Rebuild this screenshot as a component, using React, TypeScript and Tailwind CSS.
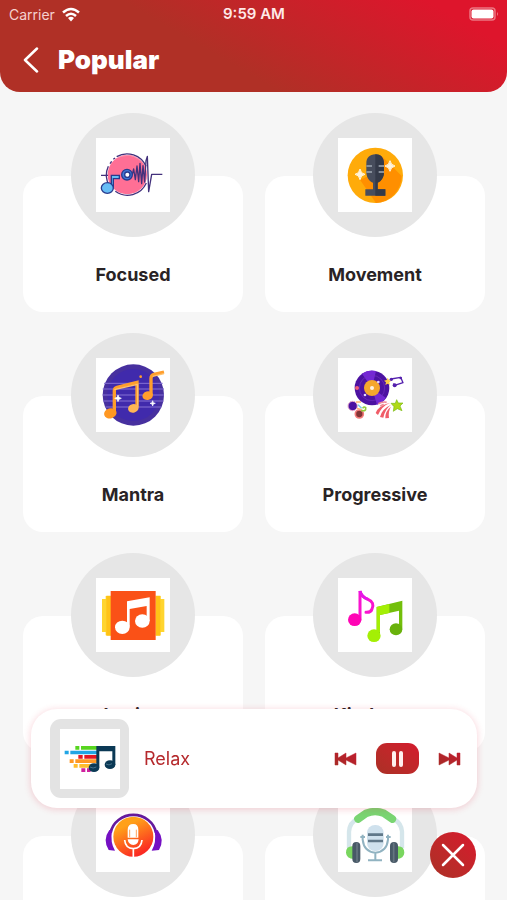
import type { ReactNode } from "react";

type Category = { id: string; name?: string; viewBox: string; art: ReactNode };

const focusedArt = (
  <>
    <circle cx="202" cy="210" r="59" fill="#ff6f95" />
    <path d="M165 165 A58 58 0 0 1 202 152 A58 58 0 0 1 250 178 A62 62 0 0 0 165 165" fill="#ff9ab4" />
    <path d="M148 243 A62 62 0 0 1 145 185 M150 177 L155 170 M160 164 L165 160 M170 156 A62 62 0 0 1 258 185 M259 235 A62 62 0 0 1 166 260" fill="none" stroke="#43317c" strokeWidth="4" />
    <path d="M123 212 H144 M205 209 H217 L221 193 L226 225 L231 184 L236 231 L240 176 L245 237 L249 183 L254 232 L258 168 L262 155 L266 261 L275 209 H307" fill="none" stroke="#43317c" strokeWidth="4" strokeLinejoin="round" />
    <circle cx="201" cy="210" r="16" fill="#3f78d8" stroke="#283b8e" strokeWidth="4" />
    <circle cx="202" cy="210" r="8" fill="#ffffff" stroke="#283b8e" strokeWidth="4" />
    <path d="M154 242 V212 H178 V222 H160 V249" fill="#66bdf5" stroke="#283b8e" strokeWidth="4" />
    <ellipse cx="142" cy="250" rx="18" ry="16" fill="#66bdf5" stroke="#283b8e" strokeWidth="4" />
  </>
);

const movementArt = (
  <>
    <circle cx="220" cy="212" r="83" fill="#ffab0a" />
    <path d="M239 154 L299 214 A83 83 0 0 1 222 295 L174 225 L195 216 Z" fill="#ff8f00" />
    <path d="M193 176 V202 C193 220 204 232 213 234 V254 H190 V273 H250 V254 H227 V234 C238 230 246 218 246 202 V176 C246 159 236 149 220 149 C203 149 193 160 193 176" fill="#474d5d" />
    <path d="M220 149 C236 149 246 159 246 176 V202 C246 218 238 230 227 234 V254 H250 V273 H220 Z" fill="#343a49" />
    <path d="M193 184 H210 M193 202 H210 M230 184 H246 M230 202 H246" stroke="#88909c" strokeWidth="6" />
    <path d="M174 193 Q176 207 189 209 Q176 211 174 225 Q172 211 159 209 Q172 207 174 193 M264 168 Q266 181 279 184 Q266 187 264 200 Q262 187 249 184 Q262 181 264 168" fill="#fff4dc" stroke="#fff4dc" strokeWidth="3" />
  </>
);

const mantraArt = (
  <>
    <circle cx="220" cy="211" r="92" fill="#47309f" />
    <circle cx="220" cy="211" r="78" fill="#402aac" />
    <path d="M132 176 H308 M128 193 H312 M128 211 H312 M130 229 H310 M136 247 H304" stroke="#8570d4" strokeWidth="3" />
    <path d="M163 265 V198 Q163 190 171 188 L231 173 V247 M273 211 V161 Q273 151 282 149 L312 142" fill="none" stroke="#ff9e2c" strokeWidth="10" />
    <path d="M163 195 L233 179 V249 M278 155 L312 147" fill="none" stroke="#ffc16d" strokeWidth="4" />
    <ellipse cx="151" cy="266" rx="19" ry="15" fill="#ff9822" transform="rotate(-15 151 266)" />
    <ellipse cx="220" cy="251" rx="16" ry="13" fill="#ffb655" transform="rotate(-15 220 251)" />
    <ellipse cx="263" cy="213" rx="16" ry="13" fill="#ff9e2c" transform="rotate(-15 263 213)" />
    <path d="M174 211 L177 218 L184 221 L177 224 L174 231 L171 224 L164 221 L171 218 Z M278 228 L280 234 L286 236 L280 238 L278 244 L276 238 L270 236 L276 234 Z" fill="#ffffff" stroke="#ffffff" strokeWidth="2" />
    <circle cx="242" cy="156" r="4" fill="#ff9e2c" />
  </>
);

const progressiveArt = (
  <>
    <circle cx="210" cy="190" r="52" fill="#4c12a1" />
    <path d="M210 190 L180 147 A52 52 0 0 1 222 139 Z M210 190 L252 220 A52 52 0 0 1 225 240 Z" fill="#7428d4" />
    <circle cx="210" cy="190" r="38" fill="none" stroke="#7330c0" strokeWidth="2" />
    <circle cx="210" cy="190" r="24" fill="#f5a62d" />
    <circle cx="210" cy="190" r="6" fill="#fff3e3" />
    <circle cx="165" cy="190" r="6" fill="#f45f76" />
    <circle cx="189" cy="211" r="4" fill="#e6d7ff" />
    <circle cx="229" cy="172" r="4" fill="#e6d7ff" />
    <path d="M257 159 L261 166 L268 168 L262 173 L264 181 L257 177 L250 181 L252 173 L246 168 L254 166 Z" fill="#ffca45" />
    <path d="M267 163 L296 158 L303 174 L278 182 L274 177" fill="none" stroke="#5420ad" strokeWidth="4" strokeLinejoin="round" />
    <circle cx="268" cy="164" r="5" fill="#5420ad" />
    <circle cx="278" cy="182" r="6" fill="#5420ad" />
    <circle cx="296" cy="160" r="4" fill="#5420ad" />
    <circle cx="152" cy="244" r="14" fill="#4c12a1" stroke="#e9b0d0" strokeWidth="3" />
    <circle cx="172" cy="268" r="12" fill="#823436" stroke="#f47a7a" strokeWidth="5" />
    <path d="M162 232 L177 232 M165 251 L178 254" stroke="#ffb66e" strokeWidth="4" />
    <path d="M168 240 L179 251" stroke="#72cdea" strokeWidth="4" />
    <path d="M177 257 Q193 262 191 249 Q186 244 182 251" fill="none" stroke="#90cc3c" strokeWidth="5" />
    <path d="M221 265 Q228 243 265 234 Q239 244 228 271 Z M234 277 Q239 253 267 240 Q249 253 244 279 Z M250 281 Q249 259 267 246 Q258 260 261 280 Z" fill="#f05d68" />
    <path d="M229 237 Q242 230 254 233 M235 244 L245 239" stroke="#ee8b96" strokeWidth="5" fill="none" />
    <path d="M284 225 L289 235 L303 235 L294 244 L300 258 L286 252 L274 260 L276 246 L267 236 L280 236 Z" fill="#afd918" stroke="#79ba16" strokeWidth="2" />
  </>
);

const lovingArt = (
  <>
    <path d="M126 163 H137 V154 H153 V272 H137 V262 H126 Z M287 154 H302 V163 H313 V262 H302 V272 H287 Z" fill="#ffd52f" />
    <path d="M139 153 H153 V273 H139 Z M287 153 H301 V273 H287 Z" fill="#ffc317" />
    <path d="M152 139 H287 V286 H152 Z" fill="#fa5117" />
    <path d="M201 170 L269 158 V229 H260 V184 L209 193 V246 H201 Z" fill="#ffffff" />
    <ellipse cx="187" cy="248" rx="22" ry="20" fill="#ffffff" />
    <ellipse cx="247" cy="229" rx="22" ry="20" fill="#ffffff" />
  </>
);

const kindnessArt = (
  <>
    <path d="M174 225 V139 Q178 157 198 164 Q219 173 210 193 Q207 204 192 203" fill="none" stroke="#f914cf" strokeWidth="9" strokeLinecap="round" />
    <path d="M174 139 Q178 157 198 164" fill="none" stroke="#e517e7" strokeWidth="9" />
    <ellipse cx="158" cy="225" rx="20" ry="19" fill="#ff04b5" />
    <path d="M224 187 L301 168 V252 H291 V198 L234 211 V272 H224 Z" fill="#73bf0b" />
    <path d="M224 187 L262 178 V205 L234 211 V262 H224 Z" fill="#a4ef05" />
    <ellipse cx="216" cy="273" rx="20" ry="19" fill="#a4ef05" />
    <ellipse cx="282" cy="254" rx="19" ry="18" fill="#69b20c" />
  </>
);

const podcastArt = (
  <>
    <defs>
      <linearGradient id="podcast-fill" x1="0" y1="0" x2="0.5" y2="1">
        <stop offset="0.3" stopColor="#ffa019" />
        <stop offset="1" stopColor="#fb2b23" />
      </linearGradient>
    </defs>
    <path d="M302 113 A69 64 0 0 1 438 113" fill="none" stroke="#651a9d" strokeWidth="8" />
    <path d="M298 105 Q277 134 296 165 L315 167 Q300 142 306 107 Z M443 105 Q465 134 447 165 L425 167 Q440 142 434 107 Z" fill="#7510c3" />
    <circle cx="370" cy="125" r="60" fill="url(#podcast-fill)" />
    <path d="M353 104 Q353 87 370 87 Q385 87 385 104 V128 H353 Z M353 133 H386 Q384 150 370 150 Q355 149 353 133" fill="#ffffff" />
    <path d="M359 104 V127 M379 104 V127" stroke="#ffa45d" strokeWidth="3" />
    <path d="M344 135 Q346 160 370 161 Q394 160 396 135 M370 161 V187" fill="none" stroke="#ffffff" strokeWidth="5" />
  </>
);

const studioArt = (
  <>
    <path d="M147 160 V110 Q149 82 172 72 M281 72 Q304 84 306 110 V160" fill="none" stroke="#d5e6eb" strokeWidth="13" />
    <path d="M174 72 L198 55 Q226 44 252 55 L277 72" fill="none" stroke="#79d572" strokeWidth="23" strokeLinecap="round" strokeLinejoin="round" />
    <path d="M162 154 Q138 151 138 173 Q139 190 162 192 Z M290 154 Q312 151 313 173 Q312 190 290 192 Z" fill="#79d65f" />
    <rect x="157" y="141" width="24" height="63" rx="12" fill="#485967" />
    <rect x="270" y="141" width="24" height="63" rx="12" fill="#485967" />
    <path d="M171 143 V202 M281 143 V202" stroke="#657580" strokeWidth="5" />
    <rect x="201" y="90" width="50" height="78" rx="24" fill="#cfe1ed" />
    <path d="M204 119 H249 M204 138 H249" stroke="#607889" strokeWidth="8" />
    <path d="M181 126 H195 M258 126 H272 M188 119 V134 Q192 171 226 173 Q260 171 264 134 V119 M226 173 V195 M204 196 H246" fill="none" stroke="#91b3c1" strokeWidth="6" />
  </>
);

const categories: Category[] = [
  { id: "focused", name: "Focused", viewBox: "108 100 222 222", art: focusedArt },
  { id: "movement", name: "Movement", viewBox: "108 100 222 222", art: movementArt },
  { id: "mantra", name: "Mantra", viewBox: "108 100 222 222", art: mantraArt },
  { id: "progressive", name: "Progressive", viewBox: "108 100 222 222", art: progressiveArt },
  { id: "loving", name: "Loving", viewBox: "108 100 222 222", art: lovingArt },
  { id: "kindness", name: "Kindness", viewBox: "108 100 222 222", art: kindnessArt },
  { id: "podcast", viewBox: "258 9 222 222", art: podcastArt },
  { id: "studio", viewBox: "114 9 222 222", art: studioArt },
];

function StatusBar() {
  return (
    <div className="grid h-7 grid-cols-3 items-center pr-2 pl-[9px]">
      <div className="flex items-center gap-1.5 text-[14px] text-[#f5d0cf]">
        <span>Carrier</span>
        <svg viewBox="0 0 20 15" className="h-[15px] w-5" aria-label="Wi-Fi">
          <path d="M2 5.5 Q10 -1.5 18 5.5 M5 9 Q10 4.5 15 9" fill="none" stroke="#ffffff" strokeWidth="2.5" />
          <path d="M7 11 Q10 8.5 13 11 L10 14.5 Z" fill="#ffffff" />
        </svg>
      </div>
      <span className="text-center text-[15px] font-semibold text-[#ffe9e8]">9:59 AM</span>
      <svg viewBox="0 0 30 14" className="h-3.5 w-[30px] justify-self-end" aria-label="Battery full">
        <rect x="1" y="1" width="25" height="12" rx="3" fill="none" stroke="#ec7581" strokeWidth="1.5" />
        <rect x="2.5" y="2.5" width="22" height="9" rx="2" fill="#ffffff" />
        <path d="M28 5 Q30 7 28 9 Z" fill="#ec7581" />
      </svg>
    </div>
  );
}

function CategoryCard({ id, name, viewBox, art }: Category) {
  return (
    <a href={"#" + id} className="block pt-[63px]">
      <div className="flex min-h-[136px] flex-col items-center rounded-[20px] bg-white pb-[23px]">
        <div className="-mt-[63px] flex size-[124px] items-center justify-center rounded-full bg-[#e6e6e6]">
          <svg viewBox={viewBox} className="size-[74px] bg-white" aria-hidden="true">
            {art}
          </svg>
        </div>
        {name && <h2 className="mt-6 text-[18px] leading-7 font-bold text-[#292325]">{name}</h2>}
      </div>
    </a>
  );
}

function Player() {
  return (
    <section
      aria-label="Now playing"
      className="fixed right-[30px] bottom-[92px] left-[31px] flex items-center rounded-[26px] bg-white py-[10px] pr-4 pl-[19px] shadow-[0_1px_6px_1px_rgba(224,30,60,0.17)]"
    >
      <div className="flex size-[79px] items-center justify-center rounded-[11px] bg-[#e3e3e3]">
        <svg viewBox="119 99 180 180" className="size-[60px] bg-white" aria-hidden="true">
          <path d="M165 150 H177 V161 H165 Z M182 150 H230 V161 H182 Z" fill="#57d51f" />
          <path d="M133 164 H145 V175 H133 Z M150 164 H230 V175 H150 Z" fill="#21a5e5" />
          <path d="M174 177 H187 V188 H174 Z M192 177 H230 V188 H192 Z" fill="#e51620" />
          <path d="M148 190 H160 V201 H148 Z M165 190 H230 V201 H165 Z" fill="#ff9824" />
          <path d="M160 204 H172 V215 H160 Z M177 204 H212 V215 H177 Z" fill="#ffbd2e" />
          <path d="M183 217 H195 V228 H183 Z M200 217 H211 V228 H200 Z" fill="#d0219e" />
          <path d="M228 150 H285 V207 H276 V166 H237 V215 H228 Z" fill="#0b3955" />
          <ellipse cx="221" cy="215" rx="16" ry="13" fill="#0b3955" />
          <ellipse cx="269" cy="206" rx="16" ry="13" fill="#0b3955" />
          <path d="M209 213 Q218 219 228 213 M257 204 Q266 210 275 203" fill="none" stroke="#47718a" strokeWidth="3" />
        </svg>
      </div>
      <p className="ml-[15px] flex-1 text-[18px] text-[#b5292c]">Relax</p>
      <div className="flex items-center gap-[18px]">
        <button type="button" aria-label="Previous" className="flex h-8 w-6 items-center justify-center">
          <svg viewBox="0 0 24 16" className="h-4 w-6">
            <defs>
              <linearGradient id="skip-fill" x1="0" y1="1" x2="1" y2="0">
                <stop stopColor="#a72b26" />
                <stop offset="1" stopColor="#c01c2e" />
              </linearGradient>
            </defs>
            <path d="M1 2 H4 V7 L12 2 V7 L22 2 V14 L12 9 V14 L4 9 V14 H1 Z" fill="url(#skip-fill)" stroke="url(#skip-fill)" strokeWidth="0.5" />
          </svg>
        </button>
        <button
          type="button"
          aria-label="Pause"
          className="flex h-[31px] w-[43px] items-center justify-center gap-[3px] rounded-[11px] bg-linear-to-tr from-[#aa3026] to-[#d4192d]"
        >
          <span className="h-4 w-1 rounded-sm bg-[#fff0ef]" />
          <span className="h-4 w-1 rounded-sm bg-[#fff0ef]" />
        </button>
        <button type="button" aria-label="Next" className="flex h-8 w-6 items-center justify-center">
          <svg viewBox="0 0 24 16" className="h-4 w-6">
            <path d="M23 2 H20 V7 L12 2 V7 L2 2 V14 L12 9 V14 L20 9 V14 H23 Z" fill="url(#skip-fill)" stroke="url(#skip-fill)" strokeWidth="0.5" />
          </svg>
        </button>
      </div>
    </section>
  );
}

export default function App() {
  return (
    <div className="flex h-screen flex-col bg-[#f6f6f6] font-['Inter','Liberation_Sans',sans-serif]">
      <header className="rounded-b-[20px] bg-[linear-gradient(30deg,#b03026_42%,#de152c_88%)] pb-2.5">
        <StatusBar />
        <div className="flex items-center gap-[19px] pt-2.5 pl-[23px]">
          <button type="button" aria-label="Back" className="flex h-11 w-4 items-center justify-center">
            <svg viewBox="0 0 16 26" className="h-[26px] w-4">
              <path d="M14 1.5 L2 13 L14 24.5" fill="none" stroke="#ffffff" strokeWidth="2.5" strokeLinecap="round" strokeLinejoin="round" />
            </svg>
          </button>
          <h1 className="text-[26px] leading-8 font-black text-white">Popular</h1>
        </div>
      </header>

      <main className="grid min-h-0 flex-1 grid-cols-2 content-start gap-x-[22px] gap-y-[21px] overflow-y-auto pt-[21px] pr-[22px] pl-[23px] [scrollbar-width:none]">
        {categories.map((category) => (
          <CategoryCard key={category.id} {...category} />
        ))}
      </main>

      <Player />
      <button
        type="button"
        aria-label="Close player"
        className="fixed right-[31px] bottom-[22px] flex size-[46px] items-center justify-center rounded-full bg-linear-to-tr from-[#aa3026] to-[#d9152d]"
      >
        <svg viewBox="0 0 24 24" className="size-6">
          <path d="M2 2 L22 22 M22 2 L2 22" stroke="#ffffff" strokeWidth="2.5" strokeLinecap="round" />
        </svg>
      </button>
    </div>
  );
}
